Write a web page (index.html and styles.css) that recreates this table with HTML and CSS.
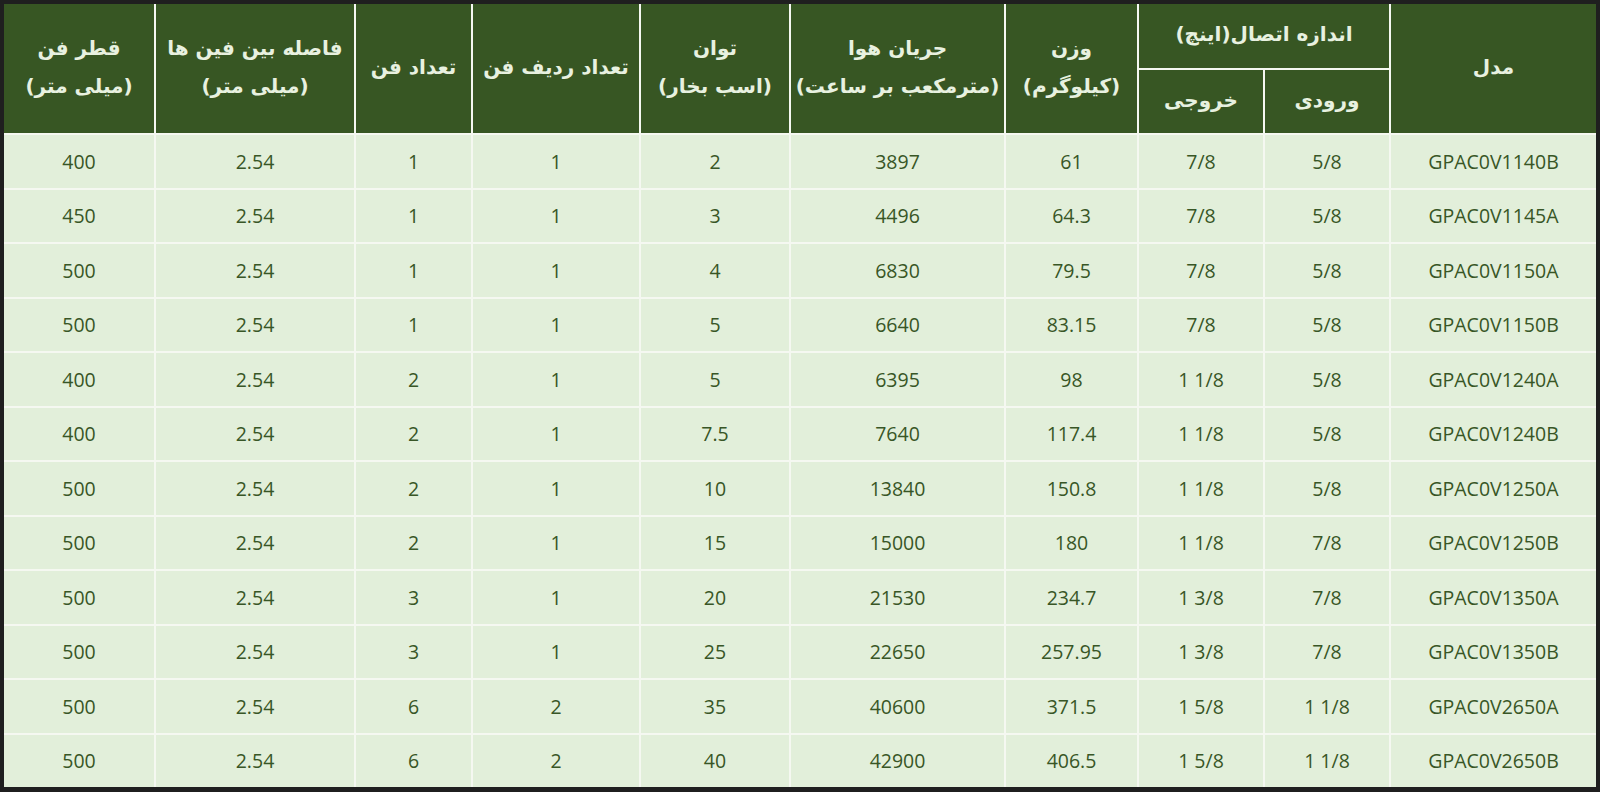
FILE: index.html
```html
<!DOCTYPE html>
<html lang="fa">
<head>
<meta charset="utf-8">
<title>مشخصات کندانسور</title>
<link rel="stylesheet" href="styles.css">
</head>
<body>
<div class="frame">
<table class="spec" dir="rtl">
  <colgroup>
    <col class="c-model">
    <col class="c-in">
    <col class="c-out">
    <col class="c-weight">
    <col class="c-air">
    <col class="c-power">
    <col class="c-rows">
    <col class="c-fans">
    <col class="c-pitch">
    <col class="c-dia">
  </colgroup>
  <thead>
    <tr class="h1">
      <th rowspan="2">مدل</th>
      <th colspan="2">اندازه اتصال(اینچ)</th>
      <th rowspan="2">وزن<br>(کیلوگرم)</th>
      <th rowspan="2">جریان هوا<br>(مترمکعب بر ساعت)</th>
      <th rowspan="2">توان<br>(اسب بخار)</th>
      <th rowspan="2">تعداد ردیف فن</th>
      <th rowspan="2">تعداد فن</th>
      <th rowspan="2">فاصله بین فین ها<br>(میلی متر)</th>
      <th rowspan="2">قطر فن<br>(میلی متر)</th>
    </tr>
    <tr class="h2">
      <th>ورودی</th>
      <th>خروجی</th>
    </tr>
  </thead>
  <tbody>
    <tr><td>GPAC0V1140B</td><td>5/8</td><td>7/8</td><td>61</td><td>3897</td><td>2</td><td>1</td><td>1</td><td>2.54</td><td>400</td></tr>
    <tr><td>GPAC0V1145A</td><td>5/8</td><td>7/8</td><td>64.3</td><td>4496</td><td>3</td><td>1</td><td>1</td><td>2.54</td><td>450</td></tr>
    <tr><td>GPAC0V1150A</td><td>5/8</td><td>7/8</td><td>79.5</td><td>6830</td><td>4</td><td>1</td><td>1</td><td>2.54</td><td>500</td></tr>
    <tr><td>GPAC0V1150B</td><td>5/8</td><td>7/8</td><td>83.15</td><td>6640</td><td>5</td><td>1</td><td>1</td><td>2.54</td><td>500</td></tr>
    <tr><td>GPAC0V1240A</td><td>5/8</td><td>1 1/8</td><td>98</td><td>6395</td><td>5</td><td>1</td><td>2</td><td>2.54</td><td>400</td></tr>
    <tr><td>GPAC0V1240B</td><td>5/8</td><td>1 1/8</td><td>117.4</td><td>7640</td><td>7.5</td><td>1</td><td>2</td><td>2.54</td><td>400</td></tr>
    <tr><td>GPAC0V1250A</td><td>5/8</td><td>1 1/8</td><td>150.8</td><td>13840</td><td>10</td><td>1</td><td>2</td><td>2.54</td><td>500</td></tr>
    <tr><td>GPAC0V1250B</td><td>7/8</td><td>1 1/8</td><td>180</td><td>15000</td><td>15</td><td>1</td><td>2</td><td>2.54</td><td>500</td></tr>
    <tr><td>GPAC0V1350A</td><td>7/8</td><td>1 3/8</td><td>234.7</td><td>21530</td><td>20</td><td>1</td><td>3</td><td>2.54</td><td>500</td></tr>
    <tr><td>GPAC0V1350B</td><td>7/8</td><td>1 3/8</td><td>257.95</td><td>22650</td><td>25</td><td>1</td><td>3</td><td>2.54</td><td>500</td></tr>
    <tr><td>GPAC0V2650A</td><td>1 1/8</td><td>1 5/8</td><td>371.5</td><td>40600</td><td>35</td><td>2</td><td>6</td><td>2.54</td><td>500</td></tr>
    <tr><td>GPAC0V2650B</td><td>1 1/8</td><td>1 5/8</td><td>406.5</td><td>42900</td><td>40</td><td>2</td><td>6</td><td>2.54</td><td>500</td></tr>
  </tbody>
</table>
</div>
</body>
</html>
```

FILE: styles.css
```css
html, body {
  margin: 0;
  padding: 0;
  background: #1f1f1f;
}

.frame {
  width: 1600px;
  height: 792px;
  box-sizing: border-box;
  border-style: solid;
  border-color: #1f1f1f;
  border-width: 4px 4px 5px 4px;
  background: #e2efda;
  overflow: hidden;
}

.spec {
  width: 1592px;
  height: 783px;
  table-layout: fixed;
  border-collapse: collapse;
  border-style: hidden;
}

.c-model { width: 206px; }
.c-in { width: 126px; }
.c-out { width: 126px; }
.c-weight { width: 133px; }
.c-air { width: 215px; }
.c-power { width: 150px; }
.c-rows { width: 168px; }
.c-fans { width: 117px; }
.c-pitch { width: 200px; }
.c-dia { width: 151px; }

.spec th,
.spec td {
  border: 2px solid #f5f8f1;
  text-align: center;
  vertical-align: middle;
  padding: 0;
}

.spec th {
  background: #375623;
  color: #e8f1e0;
  font-family: "DejaVu Sans", "Noto Sans", sans-serif;
  font-weight: bold;
  font-size: 20px;
  line-height: 38px;
  padding-bottom: 4px;
}

.spec tr.h1 th { height: 60px; }
.spec tr.h2 th { height: 59px; }

.spec td {
  background: #e2efda;
  color: #385626;
  font-family: "Open Sans", "Liberation Sans", sans-serif;
  font-size: 19.5px;
  height: 52px;
  direction: ltr;
}
```
